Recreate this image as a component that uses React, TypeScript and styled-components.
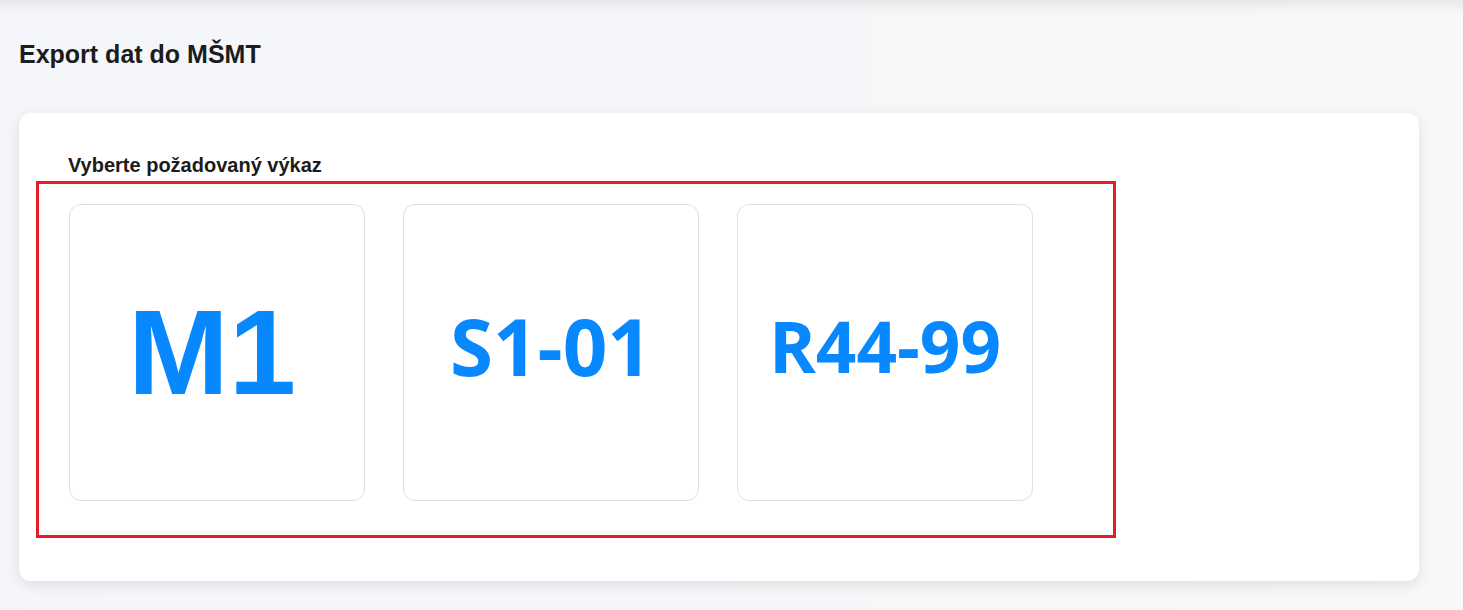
import React from "react";
import styled, { createGlobalStyle } from "styled-components";

const GlobalStyle = createGlobalStyle`
  html, body {
    margin: 0;
    padding: 0;
  }
  body {
    background:
      linear-gradient(to bottom, rgba(0, 0, 0, 0.06) 0px, rgba(0, 0, 0, 0) 14px),
      linear-gradient(to right, #f4f6f9 0%, #f6f7f9 60%, #f8f7f9 100%);
    font-family: "Liberation Sans", Arial, sans-serif;
    color: #1b1b1b;
    min-height: 610px;
  }
`

const Page = styled.div`
  padding: 40px 44px 30px 19px;
`

const PageTitle = styled.h1`
  margin: 0 0 44px 0;
  font-size: 25px;
  line-height: 29px;
  font-weight: bold;
  color: #1c1c1c;
`

const Card = styled.div`
  width: 1400px;
  box-sizing: border-box;
  background: #fff;
  border-radius: 12px;
  box-shadow: 0 4px 14px rgba(0, 0, 0, 0.1);
  padding: 41px 0 43px 17px;
`

const CardLabel = styled.p`
  margin: 0 0 4px 32px;
  font-size: 20px;
  line-height: 23px;
  font-weight: bold;
  color: #1b1b1b;
`

const ReportList = styled.div`
  width: 1080px;
  box-sizing: border-box;
  border: 3px solid #e41e25;
  padding: 20px 30px 34px 30px;
  display: flex;
  gap: 38px;
`

const ReportTile = styled.button<{ $size: number; $wide?: boolean }>`
  width: 296px;
  height: 297px;
  box-sizing: border-box;
  border: 1px solid #dedfe3;
  border-radius: 12px;
  background: #fff;
  display: flex;
  align-items: center;
  justify-content: center;
  padding: ${p => (p.$wide ? "0 10px 0 0" : "0 0 14px 0")};
  cursor: pointer;
  font-family: ${p => (p.$wide ? '"Liberation Sans", Arial' : '"Open Sans", "Noto Sans"')}, sans-serif;
  font-size: ${p => p.$size}px;
  font-weight: bold;
  line-height: 1;
  color: #0788ff;
`

const reports = [
	{ code: "M1", size: 121, wide: true },
	{ code: "S1-01", size: 78 },
	{ code: "R44-99", size: 71 },
]

const App: React.FC = () => {
	return <>
		<GlobalStyle/>
		<Page>
			<PageTitle>Export dat do MŠMT</PageTitle>
			<Card>
				<CardLabel>Vyberte požadovaný výkaz</CardLabel>
				<ReportList>
					{reports.map(r =>
						<ReportTile key={r.code} $size={r.size} $wide={r.wide}>
							{r.code}
						</ReportTile>
					)}
				</ReportList>
			</Card>
		</Page>
	</>
}

export default App
